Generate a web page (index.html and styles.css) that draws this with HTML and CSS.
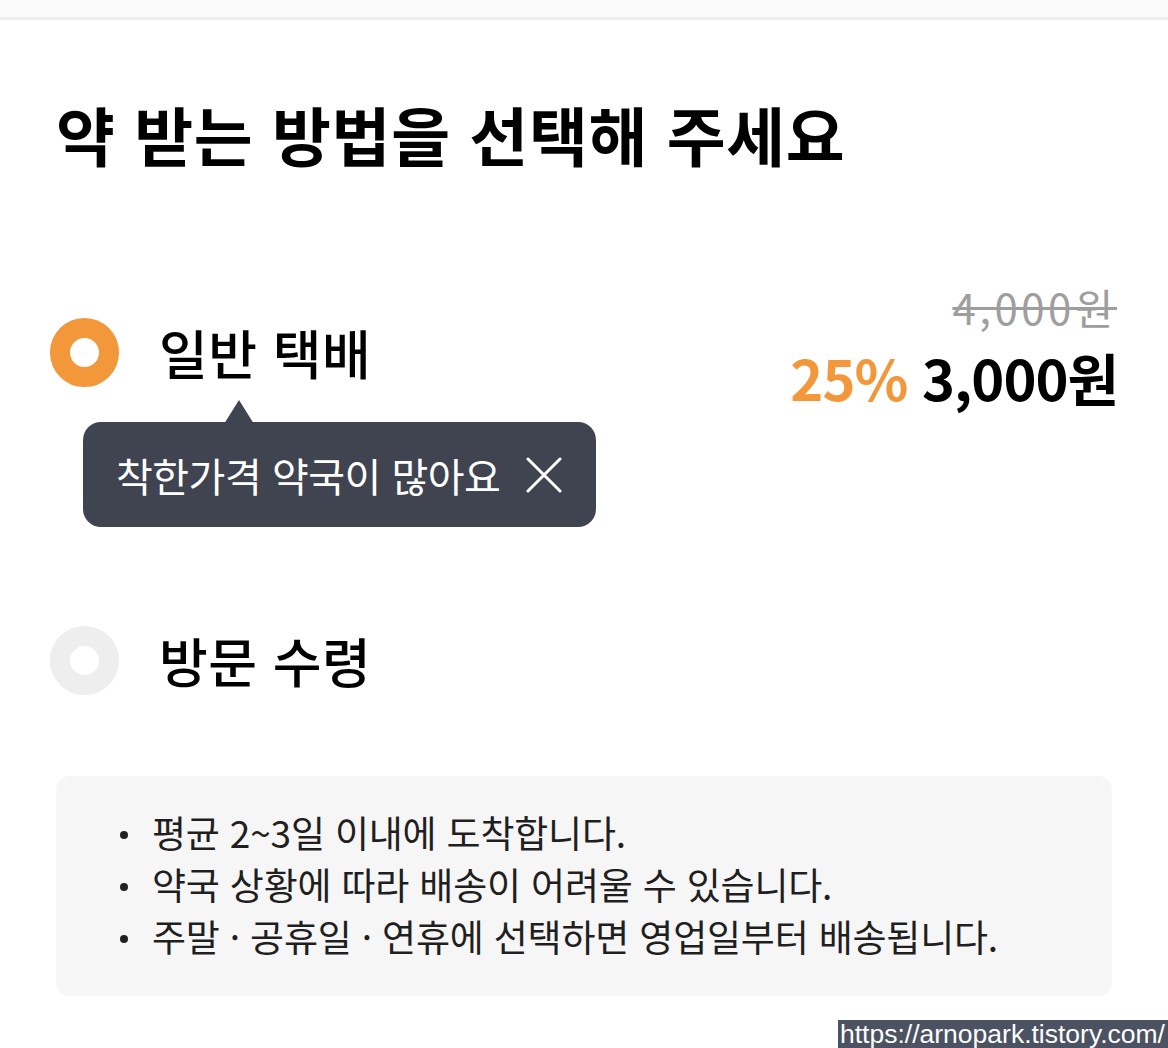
FILE: index.html
```html
<!DOCTYPE html>
<html lang="ko">
<head>
<meta charset="utf-8">
<link rel="stylesheet" href="styles.css">
</head>
<body>
<div class="topbar"></div>
<main class="page">
  <h1 class="title">약 받는 방법을 선택해 주세요</h1>

  <section class="option option-first">
    <div class="option-left">
      <span class="radio radio-on"></span>
      <span class="option-label">일반 택배</span>
    </div>
    <div class="price">
      <div class="price-old">4,000원</div>
      <div class="price-new"><span class="pct">25%</span> 3,000원</div>
    </div>
  </section>

  <div class="tooltip">
    <span class="tooltip-text">착한가격 약국이 많아요</span>
    <svg class="tooltip-close" width="36" height="36" viewBox="0 0 36 36"><path d="M2 2 L34 34 M34 2 L2 34" stroke="#fff" stroke-width="3" stroke-linecap="round" fill="none"/></svg>
  </div>

  <section class="option option-second">
    <div class="option-left">
      <span class="radio radio-off"></span>
      <span class="option-label">방문 수령</span>
    </div>
  </section>

  <div class="info">
    <ul class="info-list">
      <li>평균 2~3일 이내에 도착합니다.</li>
      <li>약국 상황에 따라 배송이 어려울 수 있습니다.</li>
      <li>주말 · 공휴일 · 연휴에 선택하면 영업일부터 배송됩니다.</li>
    </ul>
  </div>
</main>
<div class="watermark">https://arnopark.tistory.com/</div>
</body>
</html>
```

FILE: styles.css
```css
* { box-sizing: border-box; }
html, body { margin: 0; padding: 0; background: #fff; }
body {
  width: 1168px;
  height: 1048px;
  overflow: hidden;
  position: relative;
  font-family: "Noto Sans CJK KR", "Noto Sans", sans-serif;
  color: #000;
}
.topbar {
  height: 20px;
  background: #fbfbfb;
  border-bottom: 3px solid #eeeeee;
}
.page {
  padding: 0 56px;
}
.title {
  margin: 0;
  padding-top: 68px;
  font-size: 64px;
  line-height: 90px;
  font-weight: 700;
  letter-spacing: 0.7px;
}
.option {
  display: flex;
  justify-content: space-between;
  align-items: flex-start;
}
.option-first { margin-top: 140px; }
.option-left {
  display: flex;
  align-items: center;
  margin-left: -6px;
}
.radio {
  width: 69px;
  height: 69px;
  border-radius: 50%;
  flex: none;
}
.radio-on { border: 20px solid #f2973a; }
.radio-off { border: 20px solid #eeeeee; }
.option-label {
  margin-left: 40px;
  font-size: 53px;
  font-weight: 500;
  line-height: 69px;
  letter-spacing: 0.5px;
}
.price {
  text-align: right;
  margin-right: -4px;
  margin-top: -41px;
  margin-bottom: -100px;
}
.price-old {
  font-size: 42px;
  line-height: 60px;
  color: #9e9e9e;
  letter-spacing: 3.5px;
  margin-right: -1px;
  text-decoration: line-through;
  text-decoration-thickness: 3px;
}
.price-new {
  margin-top: 8px;
  font-size: 56px;
  line-height: 64px;
  font-weight: 700;
  letter-spacing: -1px;
  margin-right: -2px;
}
.pct { color: #f2973a; }
.tooltip {
  position: relative;
  margin-top: 35px;
  margin-left: 27px;
  width: 513px;
  height: 105px;
  background: #3f4450;
  border-radius: 18px;
  display: flex;
  align-items: center;
  padding-left: 33px;
  color: #fff;
}
.tooltip::before {
  content: "";
  position: absolute;
  left: 141px;
  top: -22px;
  width: 0;
  height: 0;
  border-left: 15px solid transparent;
  border-right: 15px solid transparent;
  border-bottom: 24px solid #3f4450;
}
.tooltip-text {
  font-size: 40px;
  line-height: 1;
  letter-spacing: -0.5px;
}
.tooltip-close { margin-left: 26px; }
.option-second { margin-top: 99px; }
.info {
  margin-top: 81px;
  background: #f6f6f6;
  border-radius: 14px;
  padding: 30px 0 34px 60px;
}
.info-list {
  margin: 0;
  padding: 0;
  list-style: none;
}
.info-list li {
  position: relative;
  padding-left: 36px;
  font-size: 37px;
  line-height: 52px;
  color: #1f1f1f;
  letter-spacing: -0.2px;
}
.info-list li::before {
  content: "";
  position: absolute;
  left: 4px;
  top: 25px;
  width: 8px;
  height: 8px;
  border-radius: 50%;
  background: #222;
}
.watermark {
  position: absolute;
  right: 0;
  bottom: 0;
  width: 330px;
  height: 28px;
  background: #4b5262;
  color: #fff;
  font-family: "Liberation Sans", Arial, sans-serif;
  font-size: 26.5px;
  line-height: 28px;
  padding-left: 2px;
  white-space: nowrap;
}
```
